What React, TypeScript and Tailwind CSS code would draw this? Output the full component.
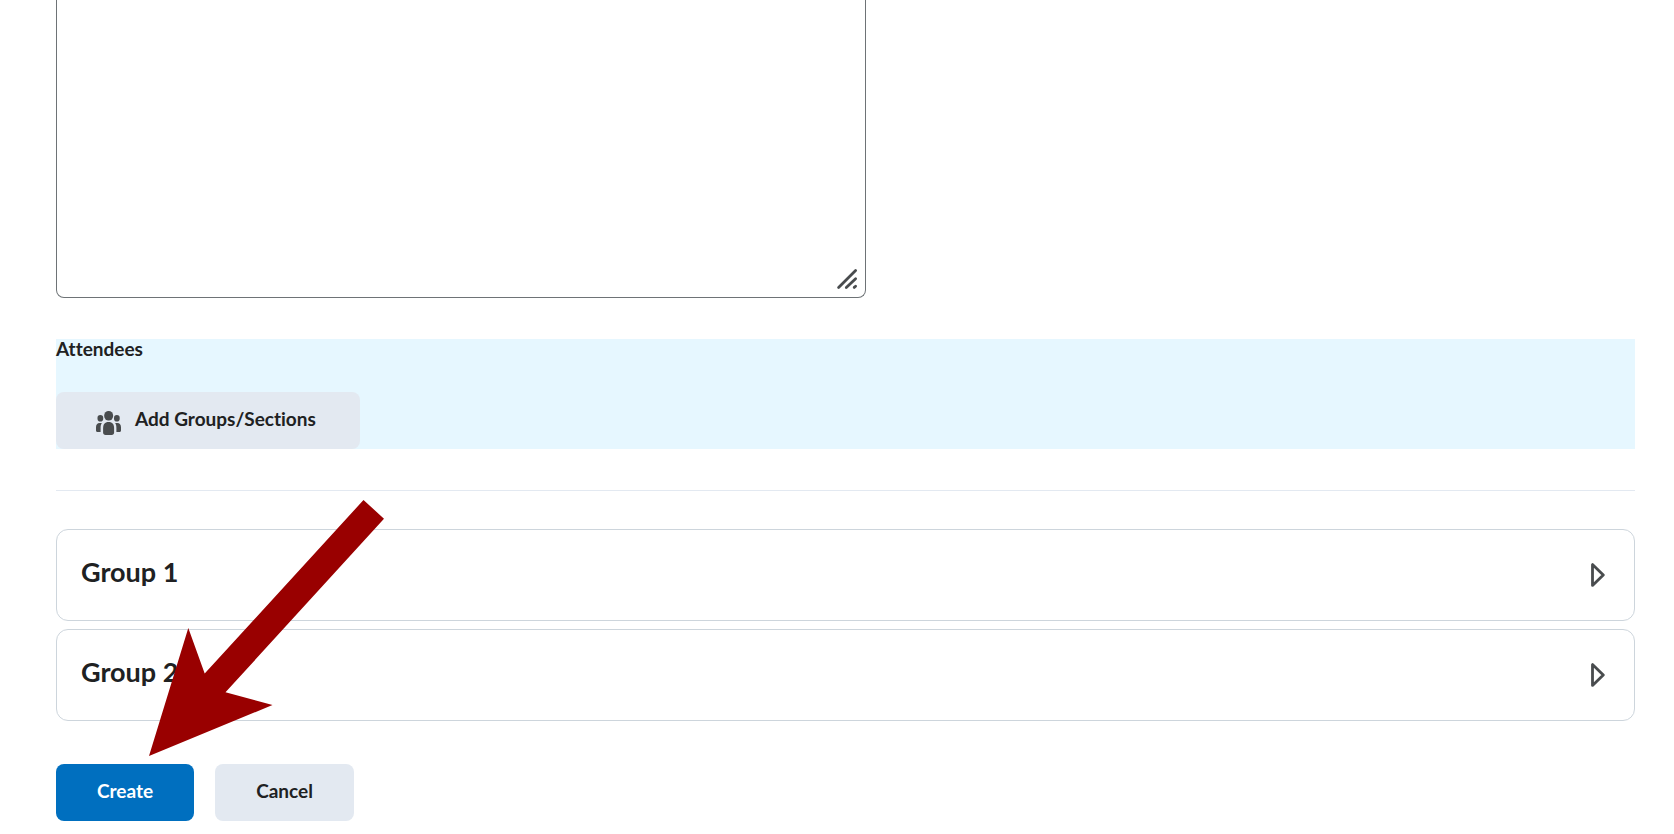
import { useState } from "react";

function GroupIcon() {
  return (
    <svg className="h-6 w-[25px] shrink-0" viewBox="0 0 25 24" fill="#494c4e" aria-hidden="true">
      <rect x="8.2" y="0" width="8.9" height="9.4" rx="4.3" />
      <path d="M12.6 11c3.9 0 5.5 2.600 5.500 6v4.600c0 1.500-.9 2.400-2.400 2.400h-6.200C8 24 7.100 23.100 7.100 21.600V17c0-3.400 1.600-6 5.500-6z" />
      <rect x="1.500" y="4" width="5.700" height="6.600" rx="2.800" />
      <rect x="18" y="4" width="5.700" height="6.600" rx="2.800" />
      <path d="M3.600 12h2.200C4.900 13.500 4.600 15 4.600 17v4H1.500C.6 21 0 20.400 0 19.500V16.200C0 13.700 1.300 12 3.600 12z" />
      <path d="M21.400 12h-2.200c.9 1.500 1.200 3 1.200 5v4h3.100c.9 0 1.500-.6 1.500-1.500v-3.300c0-2.500-1.300-4.200-3.600-4.200z" />
    </svg>
  );
}

function GroupPanel({ title }: { title: string }) {
  const [open, setOpen] = useState(false);
  return (
    <button
      type="button"
      aria-expanded={open}
      onClick={() => setOpen(!open)}
      className="flex w-full items-center justify-between rounded-xl border border-[#cdd5dc] bg-white py-[27px] pr-[29px] pl-6 text-left"
    >
      <span className="pb-1.5 text-[27px] leading-[30px] font-bold">{title}</span>
      <svg className={open ? "h-6 w-[14px] rotate-90" : "h-6 w-[14px]"} viewBox="0 0 14 24" fill="none" aria-hidden="true">
        <path d="M1.500 1.600v20.800L12.300 12z" stroke="#494c4e" strokeWidth="2.800" strokeLinejoin="round" />
      </svg>
    </button>
  );
}

export default function App() {
  return (
    <main className="relative bg-white pr-[39px] pb-3 pl-14 font-['Lato',sans-serif] text-[#202122] [font-variant-ligatures:none]">
      <div className="relative w-[810px] max-w-full">
        <textarea
          aria-label="Description"
          className="block h-[298px] w-full resize-none rounded-b-lg border border-t-0 border-[#6e7376] bg-white p-4 text-xl outline-none"
        />
        <svg className="pointer-events-none absolute right-2 bottom-2 h-[22px] w-[22px]" viewBox="0 0 22 22" aria-hidden="true">
          <path d="M2.600 19.500 19.600 2.500M10.300 19.500 19.600 10.700M18.200 19.400l1.400-1.200" fill="none" stroke="#494c4e" strokeWidth="2.800" strokeLinecap="round" />
        </svg>
      </div>

      <section aria-labelledby="attendees" className="mt-[41px] bg-[#e6f7ff]">
        <h2 id="attendees" className="pb-[33px] text-[19px] leading-5 font-bold">Attendees</h2>
        <button type="button" className="flex h-[57px] items-center gap-[14px] rounded-lg bg-[#e3e9f1] pt-1 pr-11 pl-10 text-[19px] font-bold">
          <GroupIcon />
          <span className="pb-2 leading-[21px]">Add Groups/Sections</span>
        </button>
      </section>

      <hr className="mt-[41px] border-[#e3e9f1]" />

      <div className="mt-[38px] flex flex-col gap-2">
        <GroupPanel title="Group 1" />
        <GroupPanel title="Group 2" />
      </div>

      <div className="mt-[43px] flex gap-[21px]">
        <button type="button" className="h-[57px] rounded-lg bg-[#006fbf] px-[41px] pb-0.5 text-[19px] font-bold text-white">Create</button>
        <button type="button" className="h-[57px] rounded-lg bg-[#e3e9f1] px-[41px] pb-0.5 text-[19px] font-bold">Cancel</button>
      </div>

      <svg className="pointer-events-none absolute top-[500px] left-[149px] h-[256px] w-[235px]" viewBox="0 0 235 256" aria-hidden="true">
        <path d="M214.500 0 235 18.700 76.500 192.300 123.500 205 0 256 39.300 128 55.700 173.500z" fill="#990000" />
      </svg>
    </main>
  );
}
